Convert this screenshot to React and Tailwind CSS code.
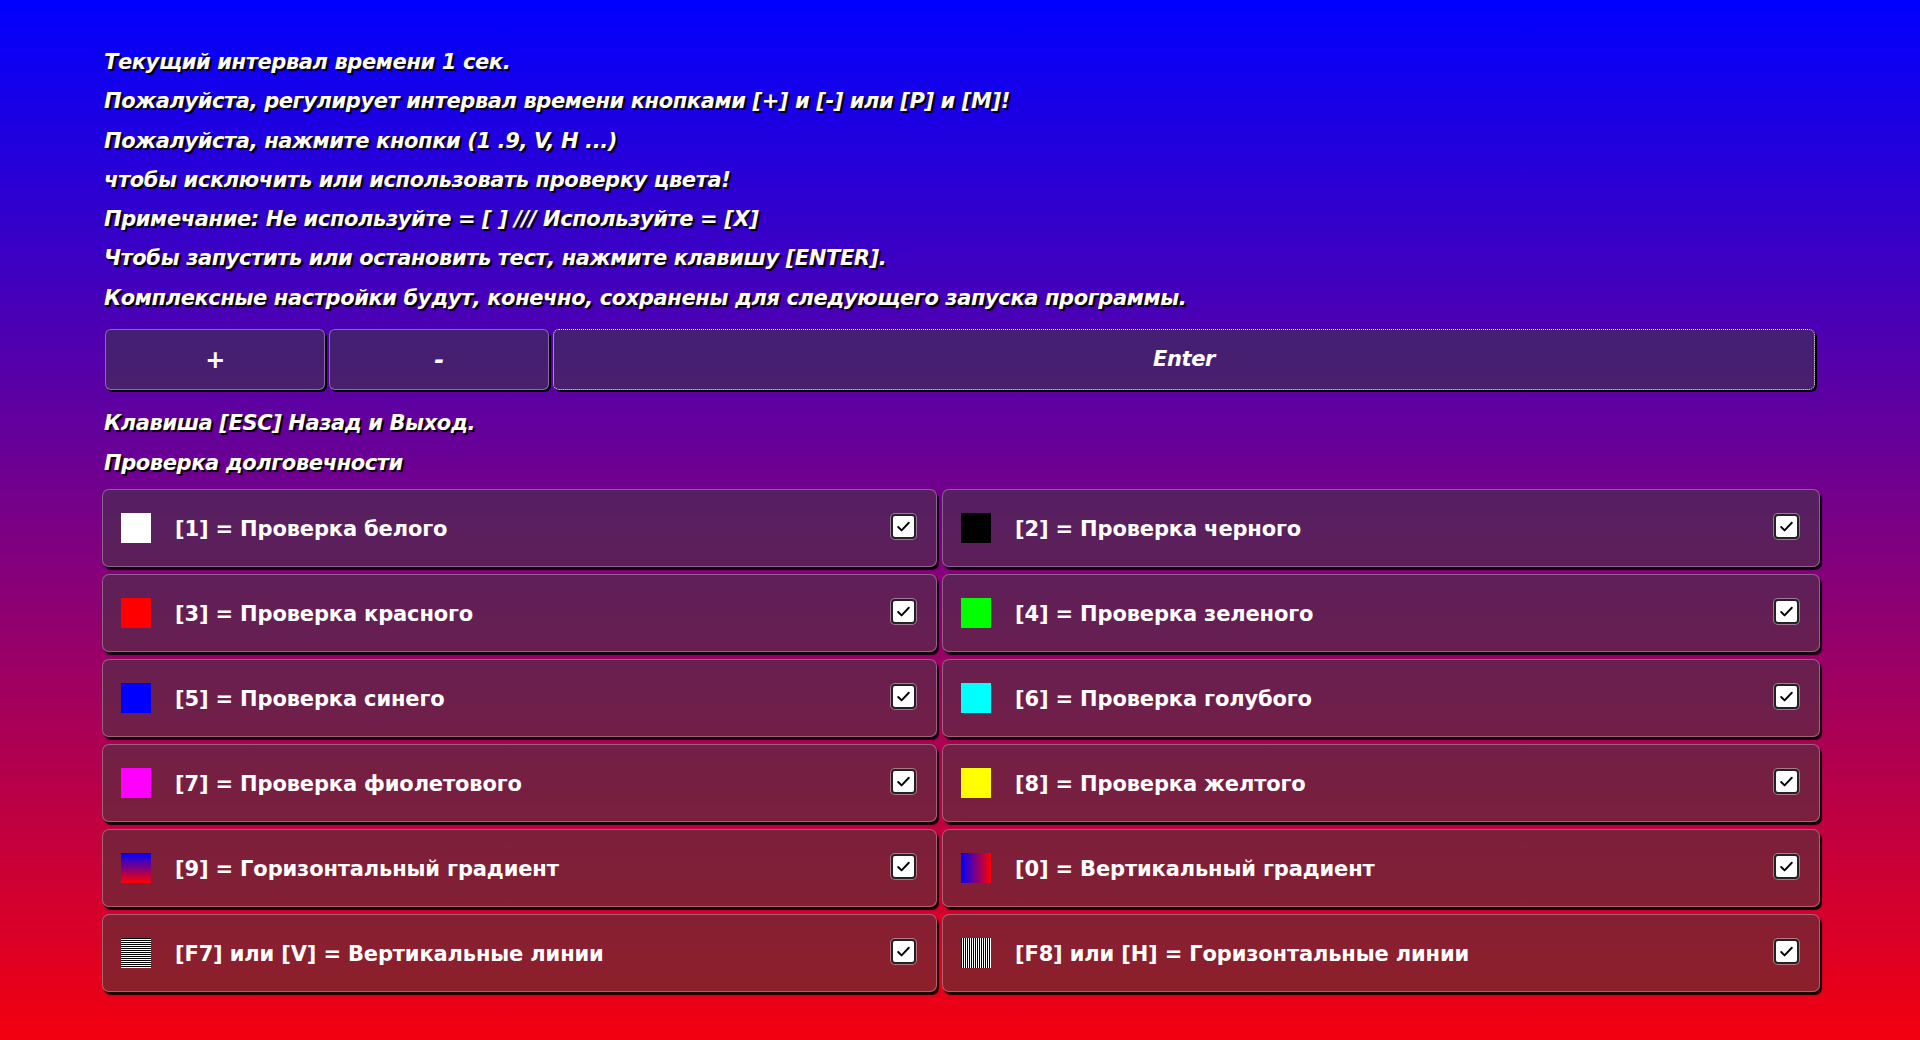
import React from 'react';

const hints = [
  'Текущий интервал времени 1 сек.',
  'Пожалуйста, регулирует интервал времени кнопками [+] и [-] или [P] и [M]!',
  'Пожалуйста, нажмите кнопки (1 .9, V, H ...)',
  'чтобы исключить или использовать проверку цвета!',
  'Примечание: Не используйте = [ ] /// Используйте = [X]',
  'Чтобы запустить или остановить тест, нажмите клавишу [ENTER].',
  'Комплексные настройки будут, конечно, сохранены для следующего запуска программы.',
];

const tests = [
  { label: '[1] = Проверка белого', swatch: 'bg-white' },
  { label: '[2] = Проверка черного', swatch: 'bg-black' },
  { label: '[3] = Проверка красного', swatch: 'bg-[#ff0000]' },
  { label: '[4] = Проверка зеленого', swatch: 'bg-[#00ff00]' },
  { label: '[5] = Проверка синего', swatch: 'bg-[#0000ff]' },
  { label: '[6] = Проверка голубого', swatch: 'bg-[#00ffff]' },
  { label: '[7] = Проверка фиолетового', swatch: 'bg-[#ff00ff]' },
  { label: '[8] = Проверка желтого', swatch: 'bg-[#ffff00]' },
  { label: '[9] = Горизонтальный градиент', swatch: 'bg-[linear-gradient(to_bottom,#0000ff,#ff0000)]' },
  { label: '[0] = Вертикальный градиент', swatch: 'bg-[linear-gradient(to_right,#0000ff,#ff0000)]' },
  {
    label: '[F7] или [V] = Вертикальные линии',
    swatch: 'bg-[repeating-linear-gradient(to_bottom,#000_0px,#000_1px,#fff_1px,#fff_2px)]',
  },
  {
    label: '[F8] или [H] = Горизонтальные линии',
    swatch: 'bg-[repeating-linear-gradient(to_right,#000_0px,#000_1px,#fff_1px,#fff_2px)]',
  },
];

const shadowText = '[text-shadow:2px_2px_1px_#000]';

function CheckBox() {
  return (
    <div className="w-[25px] h-[25px] -mt-[3px] rounded-[4px] bg-white border-2 border-[#222] ring-1 ring-white/40 flex items-center justify-center">
      <svg className="w-[17px] h-[17px]" viewBox="0 0 16 16" fill="none" stroke="#000" strokeWidth={1.8}>
        <path d="M3 8.5l3.2 3.2L13 4.5" strokeLinecap="round" strokeLinejoin="round" />
      </svg>
    </div>
  );
}

function TestCard({ label, swatch }) {
  return (
    <div className="h-[78px] flex items-center pl-[18px] pr-[20px] rounded-[7px] border border-white/30 bg-[rgba(60,60,60,0.52)] shadow-[2px_3px_1px_rgba(0,0,0,0.9)]">
      <div className={`w-[30px] h-[30px] shrink-0 ${swatch}`} />
      <span className="ml-[24px] pt-[4px] flex-1 text-white font-bold text-[21px] tracking-[-0.15px]">{label}</span>
      <CheckBox />
    </div>
  );
}

export default function App() {
  return (
    <div
      className="min-h-[1040px] w-full bg-[linear-gradient(to_bottom,#0000ff,#f3000e)] pl-[102px] pr-[100px] pt-[43px] text-white"
      style={{ fontFamily: '"DejaVu Sans", "Noto Sans", sans-serif' }}
    >
      <div className={`pl-[2px] font-bold italic text-[21px] tracking-[-0.4px] leading-[39.3px] ${shadowText}`}>
        {hints.map((line) => (
          <div key={line}>{line}</div>
        ))}
      </div>

      <div className={`mt-[11px] ml-[3px] mr-[5px] flex gap-[4px] h-[61px] font-bold italic text-[21px] tracking-[-0.4px] ${shadowText}`}>
        <button className="w-[220px] rounded-[6px] border border-white/35 bg-[rgba(60,60,60,0.52)] shadow-[2px_2px_0_#000] text-[24px]">
          +
        </button>
        <button className="w-[220px] rounded-[6px] border border-white/35 bg-[rgba(60,60,60,0.52)] shadow-[2px_2px_0_#000] text-[24px]">
          -
        </button>
        <button className="flex-1 rounded-[6px] border border-dotted border-white bg-[rgba(60,60,60,0.52)] shadow-[2px_2px_0_#000]">
          Enter
        </button>
      </div>

      <div className={`mt-[13px] pl-[2px] font-bold italic text-[21px] tracking-[-0.4px] leading-[40px] ${shadowText}`}>
        <div>Клавиша [ESC] Назад и Выход.</div>
        <div>Проверка долговечности</div>
      </div>

      <div className="mt-[6px] grid grid-cols-[835px_1fr] gap-x-[5px] gap-y-[7px]">
        {tests.map((t) => (
          <TestCard key={t.label} label={t.label} swatch={t.swatch} />
        ))}
      </div>
    </div>
  );
}
